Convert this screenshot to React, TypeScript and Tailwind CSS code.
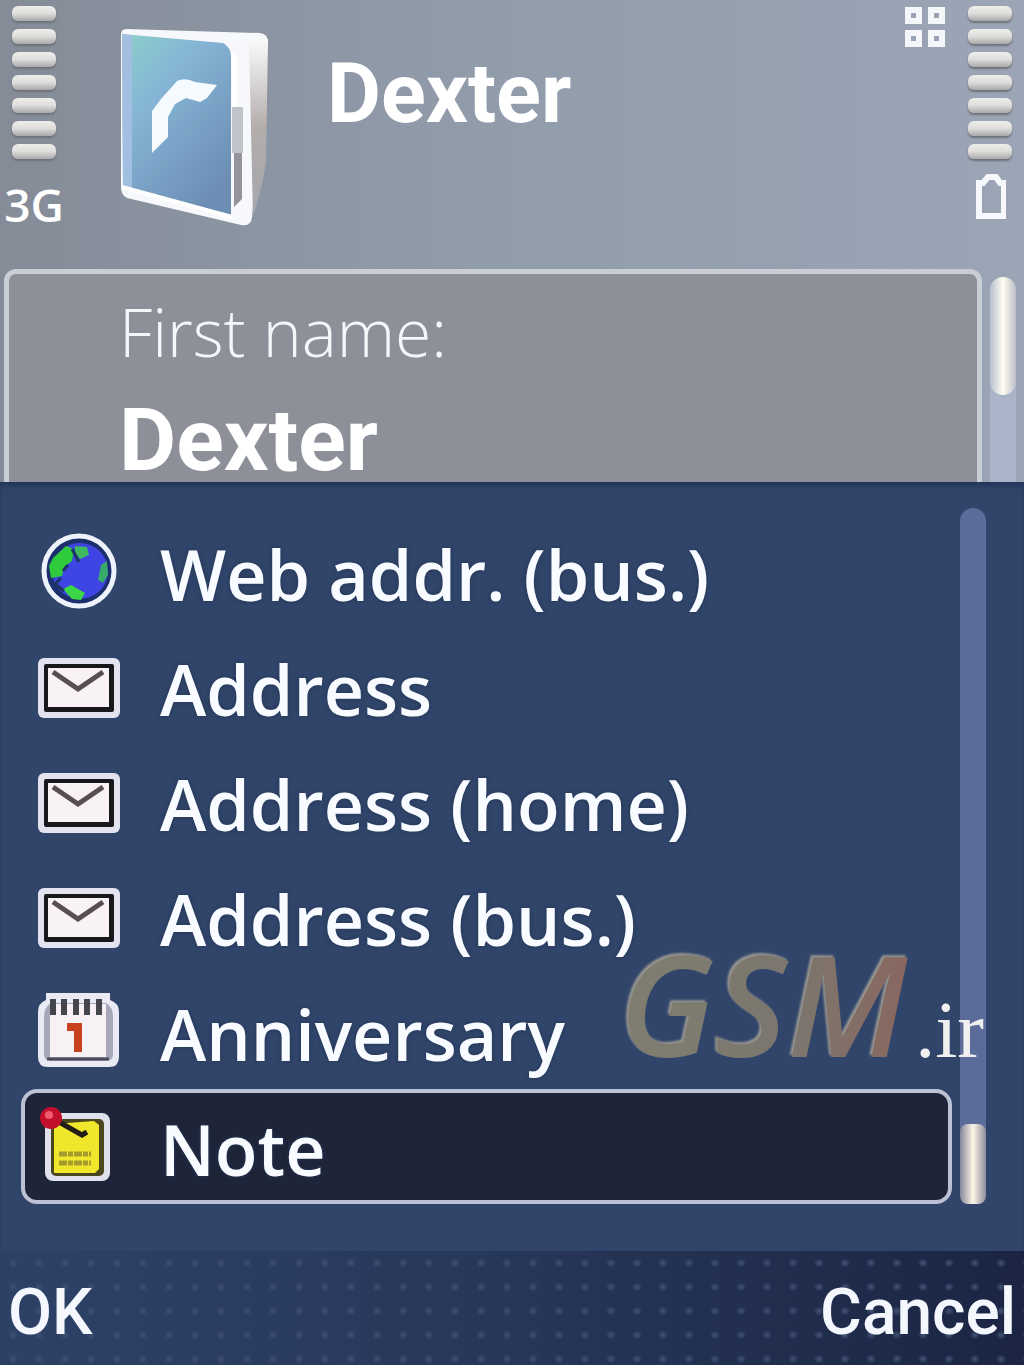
import { useState } from "react";
import clsx from "clsx";

type IconName = "globe" | "mail" | "calendar" | "note";

const items: { label: string; icon: IconName }[] = [
  { label: "Web addr. (bus.)", icon: "globe" },
  { label: "Address", icon: "mail" },
  { label: "Address (home)", icon: "mail" },
  { label: "Address (bus.)", icon: "mail" },
  { label: "Anniversary", icon: "calendar" },
  { label: "Note", icon: "note" },
];

function GlobeIcon() {
  return (
    <svg viewBox="0 0 84 80" className="h-20 w-21">
      <circle cx="42" cy="39" r="35" fill="#1b2f6c" stroke="#eef3fb" strokeWidth="5" />
      <circle cx="43" cy="39" r="28" fill="#3f45e4" />
      <path d="M16 26 L29 14 L37 17 L35 29 L27 35 L25 44 L14 46 L12 34 Z" fill="#2ecb3c" />
      <path d="M38 14 L50 15 L52 23 L43 27 L38 21 Z" fill="#3fb95f" />
      <path d="M26 57 L34 53 L48 61 L44 68 L35 67 Z" fill="#3bd748" />
      <path d="M64 33 L70 29 L71 43 L66 51 L61 48 Z" fill="#38a968" />
      <path d="M35 17 L42 30 M24 46 L18 52 L27 59 M31 33 L26 39" fill="none" stroke="#1d3464" strokeWidth="3" />
    </svg>
  );
}

function MailIcon() {
  return (
    <svg viewBox="0 -2 84 80" className="h-20 w-21">
      <rect x="1" y="9" width="82" height="60" rx="6" fill="#e2e3ef" />
      <rect x="7" y="15" width="70" height="48" rx="2" fill="#17171c" />
      <rect x="11" y="19" width="61" height="39" fill="#f8f2f4" />
      <path d="M16 23 L41 40 L66 23" fill="none" stroke="#574d52" strokeWidth="5" />
    </svg>
  );
}

function CalendarIcon() {
  return (
    <svg viewBox="0 2 84 80" className="h-20 w-21">
      <path d="M9 3 H73 V10 Q82 13 82 22 V67 Q82 77 72 77 H11 Q1 77 1 67 V22 Q1 13 9 10 Z" fill="#e9eaf3" />
      <path d="M14 13 Q7 17 7 27 V64 Q7 71 14 71 H69 Q76 71 76 64 V27 Q76 17 69 13 Z" fill="#a6a7b8" />
      <path d="M13 14 H69 V67 H13 Z" fill="#f7f0f4" />
      <path d="M10 69 H72" stroke="#4b4b5b" strokeWidth="3" />
      <path d="M16 9 V25 M27 9 V25 M39 9 V25 M50 9 V25 M62 9 V25" stroke="#45454e" strokeWidth="6" />
      <path d="M30 37 H41 V62" fill="none" stroke="#c8401e" strokeWidth="8" />
    </svg>
  );
}

function NoteIcon() {
  return (
    <svg viewBox="0 0 84 80" className="h-20 w-21">
      <rect x="8" y="6" width="65" height="68" rx="8" fill="#dfe2ec" />
      <rect x="14" y="12" width="53" height="57" rx="5" fill="#4a461e" />
      <path d="M17 17 L57 14 L62 18 V62 L58 66 H17 Z" fill="#f0e62b" />
      <path d="M22 47 H54 M22 56 H54" stroke="#a59b2c" strokeWidth="5" strokeDasharray="8 1 5 1" />
      <path d="M22 15 L45 28 L50 25" fill="none" stroke="#231d18" strokeWidth="5" />
      <circle cx="14" cy="11" r="11" fill="#c20f2c" />
      <circle cx="12" cy="8" r="4" fill="#ef5a70" />
    </svg>
  );
}

const icons = { globe: GlobeIcon, mail: MailIcon, calendar: CalendarIcon, note: NoteIcon };

function ContactIcon() {
  return (
    <svg viewBox="0 0 152 202" className="h-[202px] w-38">
      <defs>
        <linearGradient id="cover" x1="0" y1="0" x2="0.7" y2="1">
          <stop offset="0" stopColor="#8ccfc9" />
          <stop offset="0.35" stopColor="#86b6d6" />
          <stop offset="1" stopColor="#6c8db4" />
        </linearGradient>
        <linearGradient id="side" x1="0" y1="0" x2="0" y2="1">
          <stop offset="0" stopColor="#fbfbfb" />
          <stop offset="0.5" stopColor="#b3adac" />
          <stop offset="1" stopColor="#a5a5ad" />
        </linearGradient>
      </defs>
      <path d="M7 2 L141 6 Q149 7 149 15 L133 190 Q132 200 122 198 L8 171 Q2 168 2 160 V8 Q2 2 7 2 Z" fill="#f6f8fb" />
      <path d="M130 16 L149 12 L147 135 Q143 162 134 190 Z" fill="url(#side)" />
      <path d="M3 7 L104 16 Q112 20 112 30 V188 L4 160 Z" fill="url(#cover)" />
      <path d="M3 7 L13 8 V161 L4 159 Z" fill="#a2bfe2" />
      <path d="M113 26 Q118 27 118 34 V79 H113 Z" fill="#fff" />
      <path d="M113 80 H124 V126 H113 Z" fill="#bfc3ca" />
      <path d="M115 126 H123 V172 L115 180 Z" fill="#94929c" />
      <path d="M3 160 L113 190" stroke="#fff" strokeWidth="4" />
      <path d="M33 126 V84 L42 72 L58 54 Q66 50 76 55 L98 58 L88 71 L81 75 L67 71 L56 77 L49 90 V110 Z" fill="#f5faff" />
    </svg>
  );
}

function Bars() {
  return (
    <div className="flex flex-col gap-2">
      {[1, 2, 3, 4, 5, 6, 7].map((n) => (
        <span
          key={n}
          className="h-[15px] w-11 rounded-md bg-gradient-to-b from-[#eeeeeb] via-[#dedddb] to-[#aaa9aa] shadow-[0_2px_2px_#6e727b]"
        />
      ))}
    </div>
  );
}

export default function App() {
  const [selected, setSelected] = useState("Note");

  return (
    <div className="relative flex min-h-screen flex-col overflow-hidden bg-[#31456a] font-['Open_Sans',sans-serif] text-white">
      <div className="bg-gradient-to-r from-[#858c98] via-[#929dac] to-[#9ba5b5]">
        {/* Status bar */}
        <header className="flex h-[269px] items-start">
          <div className="flex w-[68px] flex-col items-center gap-5 pt-[6px]">
            <Bars />
            <span className="text-[46px] leading-[50px] font-semibold">3G</span>
          </div>
          <div className="pt-[27px] pl-[51px]">
            <ContactIcon />
          </div>
          <h1 className="flex-1 pt-[34px] pl-[56px] font-['Roboto',sans-serif] text-[83px] leading-[120px] font-bold">
            Dexter
          </h1>
          <svg viewBox="0 0 42 42" className="mt-[6px] mr-[22px] h-[42px] w-[42px]" fill="none" stroke="#f4f6fa" strokeWidth="6">
            <path d="M4 4 H15 V15 H4 Z M27 4 H38 V15 H27 Z M4 27 H15 V38 H4 Z M27 27 H38 V38 H27 Z" />
          </svg>
          <div className="flex flex-col items-center gap-3 pt-[6px] pr-3">
            <Bars />
            <svg viewBox="0 0 32 48" className="h-12 w-8" fill="none" stroke="#f6f8fb" strokeWidth="6">
              <path d="M5 45 V12 H9 L14 6 H22 L26 12 H30 V45 Z" />
            </svg>
          </div>
        </header>

        {/* Contact form, partly covered by the popup */}
        <div className="flex h-[213px] items-start gap-2 overflow-hidden pr-2 pl-1">
          <div className="h-64 flex-1 rounded-xl border-5 border-[#c9ced4] bg-[#8d9099] pt-3 pl-[110px]">
            <label htmlFor="first-name" className="block text-[66px] leading-[90px] font-light text-[#f4f6fa]">
              First name:
            </label>
            <input
              id="first-name"
              defaultValue="Dexter"
              className="block h-[128px] w-full bg-transparent font-['Roboto',sans-serif] text-[88px] leading-[128px] font-bold text-white outline-none"
            />
          </div>
          <div className="mt-2 h-64 w-[26px] rounded-full bg-[#a9b4c8]">
            <div className="h-[118px] rounded-full bg-gradient-to-r from-[#b9c0cd] via-[#fffdf0] to-[#bdbec8]" />
          </div>
        </div>
      </div>

      {/* Field picker */}
      <div className="relative flex flex-1 pr-[38px] pb-[47px] pl-[21px] shadow-[inset_0_4px_4px_#24375a]">
        <ul className="flex-1 pt-8">
          {items.map(({ label, icon }) => {
            const Icon = icons[icon];
            const active = label === selected;
            return (
              <li key={label}>
                <button
                  type="button"
                  onClick={() => setSelected(label)}
                  className={clsx(
                    "flex h-[115px] w-full items-center gap-[39px] rounded-2xl border-4 pl-3 text-left text-[70px] leading-[100px] font-semibold",
                    active ? "border-[#bcc2d3] bg-[#1e2539]" : "border-transparent"
                  )}
                >
                  <Icon />
                  <span className="pt-1 text-[#f8fbff] [text-shadow:0_0_4px_#223354]">{label}</span>
                </button>
              </li>
            );
          })}
        </ul>
        <div className="mt-[26px] ml-2 flex w-[26px] flex-col justify-end rounded-full bg-[#5b6c9b]">
          <div className="h-20 rounded-lg bg-gradient-to-r from-[#84879b] via-[#fff6e6] to-[#8d8c9b]" />
        </div>

        <div className="pointer-events-none absolute right-10 bottom-[178px] flex items-baseline leading-none">
          <span className="bg-gradient-to-r from-[#7f7e70] via-[#7c766e] via-60% to-[#8a665e] bg-clip-text pr-2 text-[140px] font-semibold text-transparent italic drop-shadow-[-2px_-2px_1px_#9a9892]">
            GSM
          </span>
          <span className="font-['Liberation_Serif',serif] text-[80px] text-[#f0f0ee]">.ir</span>
        </div>
      </div>

      {/* Softkeys */}
      <footer className="bg-gradient-to-r from-[#2d4167] via-[#273759] to-[#1b2543]">
        <div className="flex h-[116px] items-center justify-between bg-[radial-gradient(#3d4d70_1px,transparent_5px)] bg-[size:26px_24px] px-2 pt-2 font-['Roboto',sans-serif] text-[64px] leading-none font-medium text-[#f4f7fd]">
          <button type="button">OK</button>
          <button type="button">Cancel</button>
        </div>
      </footer>
    </div>
  );
}
